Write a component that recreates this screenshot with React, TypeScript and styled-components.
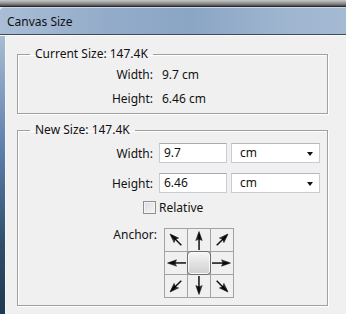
import React from 'react';
import styled, {createGlobalStyle} from 'styled-components';

const GlobalStyle = createGlobalStyle`
    html, body {
        margin: 0;
        padding: 0;
        background: #f0f0f0;
    }
    body {
        font-family: "Noto Sans", "Open Sans", sans-serif;
        font-size: 12px;
        color: #111;
    }
`;

type Dir = 'nw' | 'n' | 'ne' | 'w' | 'c' | 'e' | 'sw' | 's' | 'se';

const angles: Record<Dir, number> = {
    nw: -45,
    n: 0,
    ne: 45,
    w: -90,
    c: 0,
    e: 90,
    sw: -135,
    s: 180,
    se: 135,
};

const anchorCells: Dir[] = ['nw', 'n', 'ne', 'w', 'c', 'e', 'sw', 's', 'se'];

function Arrow({dir}: {dir: Dir}) {
    const id = `grad-${dir}`;
    return (
        <svg
            width='22'
            height='22'
            viewBox='0 0 22 22'
        >
            <defs>
                <linearGradient
                    id={id}
                    x1='0'
                    y1='0'
                    x2='1'
                    y2='0'
                >
                    <stop
                        offset='0'
                        stopColor='#666'
                    />
                    <stop
                        offset='0.5'
                        stopColor='#000'
                    />
                    <stop
                        offset='1'
                        stopColor='#333'
                    />
                </linearGradient>
            </defs>
            <g transform={`rotate(${angles[dir]} 11 11)`}>
                <rect
                    x='10.3'
                    y='8'
                    width='1.5'
                    height={dir.length === 2 ? 10.5 : 13}
                    fill='#111'
                />
                <polygon
                    points='11,2.5 7.8,11.5 11,10 14.2,11.5'
                    fill={`url(#${id})`}
                    stroke='#000'
                    strokeWidth='0.5'
                />
            </g>
        </svg>
    );
}

export default function App() {
    return (
        <>
            <GlobalStyle/>
            <Screen>
                <TopStrip/>
                <TitleBar>
                    <Title>{'Canvas Size'}</Title>
                </TitleBar>
                <Body>
                    <Frame/>
                    <Client>
                        <Group>
                            <Legend>{'Current Size: 147.4K'}</Legend>
                            <InfoRow>
                                <Label $width={135}>{'Width:'}</Label>
                                <span>{'9.7 cm'}</span>
                            </InfoRow>
                            <InfoRow>
                                <Label $width={135}>{'Height:'}</Label>
                                <span>{'6.46 cm'}</span>
                            </InfoRow>
                        </Group>
                        <Group $spaced={true}>
                            <Legend>{'New Size: 147.4K'}</Legend>
                            <FieldRow>
                                <Label $width={135}>{'Width:'}</Label>
                                <TextBox>{'9.7'}</TextBox>
                                <Select>
                                    <span>{'cm'}</span>
                                    <Caret/>
                                </Select>
                            </FieldRow>
                            <FieldRow>
                                <Label $width={135}>{'Height:'}</Label>
                                <TextBox>{'6.46'}</TextBox>
                                <Select>
                                    <span>{'cm'}</span>
                                    <Caret/>
                                </Select>
                            </FieldRow>
                            <CheckRow>
                                <CheckBox/>
                                <span>{'Relative'}</span>
                            </CheckRow>
                            <AnchorRow>
                                <Label $width={139}>{'Anchor:'}</Label>
                                <AnchorGrid>
                                    {anchorCells.map((d) => (
                                        <AnchorCell key={d}>
                                            {d === 'c' ? <AnchorButton/> : <Arrow dir={d}/>}
                                        </AnchorCell>
                                    ))}
                                </AnchorGrid>
                            </AnchorRow>
                        </Group>
                    </Client>
                </Body>
            </Screen>
        </>
    );
}

const Screen = styled.div`
    width: 346px;
    height: 314px;
    overflow: hidden;
    display: flex;
    flex-direction: column;
`;

const TopStrip = styled.div`
    height: 6px;
    background: linear-gradient(#c9c9c9, #8a8a8a 60%, #4a4a4a);
    border-bottom: 1px solid #2a2a2a;
`;

const TitleBar = styled.div`
    height: 26px;
    display: flex;
    align-items: center;
    padding-left: 7px;
    border-top: 1px solid #c8d6e6;
    border-bottom: 1px solid #3d4a5a;
    border-top-left-radius: 4px;
    background: linear-gradient(90deg, #a9bdd6 0%, #94acca 30%, #8ba5c5 55%, #9db4cf 80%, #a5bad3 100%);
`;

const Title = styled.span`
    font-size: 12px;
    color: #111;
    margin-top: 1px;
`;

const Body = styled.div`
    flex: 1;
    display: flex;
    border-top: 1px solid #fbfbfb;
`;

const Frame = styled.div`
    width: 5px;
    background: linear-gradient(#a9bcd3, #5f7fae 40%, #2f4d6a 75%, #1e3a52);
    border-right: 1px solid #f4f6f8;
`;

const Client = styled.div`
    flex: 1;
    background: #f0f0f0;
    padding: 10px 0 0 11px;
`;

const Group = styled.fieldset<{ $spaced?: boolean }>`
    box-sizing: border-box;
    width: 311px;
    margin: ${({$spaced}) => ($spaced ? '8px' : '0')} 0 0 0;
    padding: 0 0 ${({$spaced}) => ($spaced ? '7px' : '3px')} 0;
    border: 1px solid #a0a0a0;
    box-shadow: 1px 1px 0 #ffffff, inset 1px 1px 0 #ffffff;
    min-width: 0;
`;

const Legend = styled.legend`
    margin-left: 12px;
    padding: 0 5px;
    line-height: 16px;
    height: 16px;
`;

const Label = styled.span<{ $width: number }>`
    width: ${({$width}) => $width}px;
    text-align: right;
    flex-shrink: 0;
`;

const InfoRow = styled.div`
    display: flex;
    align-items: center;
    height: 24px;
    gap: 9px;
`;

const FieldRow = styled.div`
    display: flex;
    align-items: center;
    gap: 6px;
    height: 20px;
    margin-top: 5px;

    & + & {
        margin-top: 10px;
    }
`;

const TextBox = styled.div`
    box-sizing: border-box;
    width: 68px;
    height: 20px;
    background: #fff;
    border: 1px solid #c9cdd2;
    border-top-color: #a9adb3;
    padding: 0 4px;
    line-height: 18px;
`;

const Select = styled.div`
    box-sizing: border-box;
    width: 89px;
    height: 20px;
    margin-left: -2px;
    background: #fff;
    border: 1px solid #c9cdd2;
    border-top-color: #b4b8be;
    padding: 0 6px 0 8px;
    display: flex;
    align-items: center;
    justify-content: space-between;
    line-height: 18px;
`;

const Caret = styled.span`
    width: 0;
    height: 0;
    border-left: 3.5px solid transparent;
    border-right: 3.5px solid transparent;
    border-top: 4px solid #111;
    margin-top: 1px;
`;

const CheckRow = styled.div`
    display: flex;
    align-items: center;
    gap: 3px;
    height: 16px;
    margin: 6px 0 0 125px;
`;

const CheckBox = styled.span`
    box-sizing: border-box;
    width: 13px;
    height: 13px;
    border: 1px solid #8e8f8f;
    background: linear-gradient(135deg, #dcdcdc, #f6f6f6);
    box-shadow: inset 0 0 0 1px #f4f4f4;
`;

const AnchorRow = styled.div`
    display: flex;
    align-items: flex-start;
    gap: 7px;
    margin-top: 13px;

    ${Label} {
        margin-top: -2px;
    }
`;

const AnchorGrid = styled.div`
    display: grid;
    grid-template-columns: repeat(3, 22px);
    grid-template-rows: repeat(3, 22px);
    gap: 1px;
    padding: 1px;
    background: #a3a3a3;
`;

const AnchorCell = styled.div`
    background: #f0f0f0;
    display: flex;
    align-items: center;
    justify-content: center;
    position: relative;
`;

const AnchorButton = styled.div`
    position: absolute;
    inset: -1px;
    box-sizing: border-box;
    border: 1px solid #6f6f6f;
    border-radius: 4px;
    background: linear-gradient(#f6f6f6, #e2e2e2 50%, #d0d0d0);
    box-shadow: inset 0 0 0 1px #fafafa;
`;
